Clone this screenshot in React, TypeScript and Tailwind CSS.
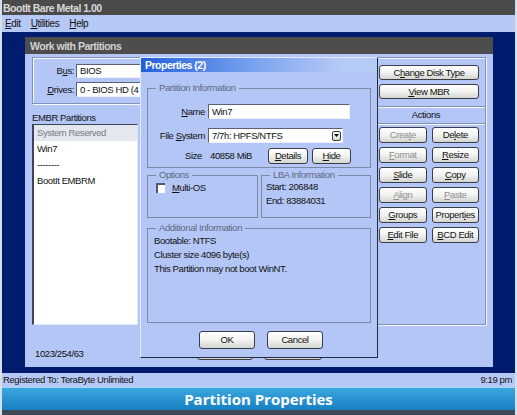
import React from 'react'

function U({ children }: { children: React.ReactNode }) {
  return <span className="underline decoration-[1px] underline-offset-[1px]">{children}</span>
}

type BtnProps = {
  children?: React.ReactNode
  disabled?: boolean
  className?: string
}

function Btn({ children, disabled, className = '' }: BtnProps) {
  return (
    <div
      className={`flex items-center justify-center rounded-[3px] border border-[#3a3e48] bg-linear-to-b from-[#ffffff] via-[#f2f2f0] to-[#d4d4d0] leading-none ${disabled ? 'text-[#8e8e8e]' : 'text-[#111]'} ${className}`}
    >
      {children}
    </div>
  )
}

function Group({
  title,
  className = '',
  children,
}: {
  title: string
  className?: string
  children?: React.ReactNode
}) {
  return (
    <fieldset className={`min-w-0 border border-[#7d88a6] ${className}`}>
      <legend className="ml-[8px] px-[3px] leading-[12px] text-[#5f6882]">{title}</legend>
      {children}
    </fieldset>
  )
}

const inset =
  'border border-r-[#eef2ff] border-b-[#eef2ff] border-t-[#5a6278] border-l-[#5a6278] bg-white'

function Dialog() {
  return (
    <div className="absolute left-[115px] top-[20px] flex h-[301px] w-[238px] flex-col border border-t-[#e4eaff] border-l-[#e4eaff] border-r-[#232a3e] border-b-[#232a3e] bg-[#b4c6f6]">
      <div className="h-[14px] bg-linear-to-r from-[#2160dc] via-[#86aaf0] via-55% to-[#b6caf6] to-85% pl-[4px] text-[10.5px] font-bold leading-[14px] tracking-[-0.5px] text-white">
        Properties (2)
      </div>
      <div className="flex flex-col px-[6px]">
        <Group title="Partition Information" className="mt-[10px] h-[86px]">
          <div className="flex flex-col pt-[10px]">
            <div className="flex h-[15px] items-center">
              <span className="w-[57px] text-right">
                <U>N</U>ame
              </span>
              <div className={`ml-[3px] flex h-[15px] w-[142px] items-center pl-[3px] ${inset}`}>
                Win7
              </div>
            </div>
            <div className="mt-[9px] flex h-[15px] items-center">
              <span className="w-[57px] text-right">
                File <U>S</U>ystem
              </span>
              <div className={`ml-[3px] flex h-[15px] w-[135px] items-center pl-[3px] ${inset}`}>
                7/7h: HPFS/NTFS
                <span className="mr-[1px] ml-auto flex h-[10px] w-[9px] items-center justify-center rounded-[2px] border border-[#3a3e48] bg-linear-to-b from-white to-[#d8d8d4]">
                  <svg width="5" height="3" viewBox="0 0 5 3">
                    <path d="M0 0h5L2.5 3z" fill="#111" />
                  </svg>
                </span>
              </div>
            </div>
            <div className="mt-[5px] flex h-[15px] items-center">
              <span className="w-[57px] pr-[3px] text-right">Size</span>
              <span className="ml-[5px] w-[58px]">40858 MiB</span>
              <Btn className="h-[16px] w-[40px]">
                <U>D</U>etails
              </Btn>
              <Btn className="ml-[4px] h-[16px] w-[39px]">
                <U>H</U>ide
              </Btn>
            </div>
          </div>
        </Group>
        <div className="mt-[1px] flex gap-[3px]">
          <Group title="Options" className="h-[49px] w-[111px]">
            <div className="mt-[1px] flex h-[11px] items-center pl-[8px]">
              <span className="h-[10px] w-[9px] border-t-2 border-l-2 border-t-[#555a66] border-l-[#555a66] bg-white" />
              <span className="ml-[7px]">
                <U>M</U>ulti-OS
              </span>
            </div>
          </Group>
          <Group title="LBA Information" className="h-[49px] flex-1">
            <div className="-mt-[1px] pl-[4px] leading-[14px]">
              <div>Start: 206848</div>
              <div>End: 83884031</div>
            </div>
          </Group>
        </div>
        <Group title="Additional Information" className="mt-[4px] h-[101px]">
          <div className="pl-[6px] leading-[14px]">
            <div>Bootable: NTFS</div>
            <div>Cluster size 4096 byte(s)</div>
            <div>This Partition may not boot WinNT.</div>
          </div>
        </Group>
        <div className="mt-[8px] flex justify-center gap-[12px] pl-[4px]">
          <Btn className="h-[18px] w-[56px]">OK</Btn>
          <Btn className="h-[18px] w-[56px]">Cancel</Btn>
        </div>
      </div>
    </div>
  )
}

export default function App() {
  const etched =
    'border border-[#8491b6] shadow-[inset_1px_1px_0_#f3f6ff,1px_1px_0_#f3f6ff]'
  return (
    <div className="flex h-[415px] w-[517px] flex-col overflow-hidden border-x-2 border-[#d3e0ea] bg-[#001c6e] font-['Liberation_Sans',Arial,sans-serif] text-[9.5px] leading-[12px] tracking-[-0.4px] text-[#111]">
      <div className="flex h-[15px] items-center bg-[#4a4a4a] pl-[1px] text-[10.5px] font-bold tracking-[-0.5px] text-[#d8d8d8]">
        BootIt Bare Metal 1.00
      </div>
      <div className="flex h-[17px] items-center gap-[10px] bg-[#b6c8f6] pl-[3px] text-[10px]">
        <span>
          <U>E</U>dit
        </span>
        <span>
          <U>U</U>tilities
        </span>
        <span>
          <U>H</U>elp
        </span>
      </div>

      <div className="flex h-[341px] pt-[5px] pb-[6px] pl-[23px]">
        <div className="relative flex h-full w-[468px] flex-col">
          <div className="flex h-[17px] items-center bg-[#4d4d4d] pl-[5px] text-[10.5px] font-bold tracking-[-0.5px] text-[#d2d2d2]">
            Work with Partitions
          </div>
          <div className="flex flex-1 justify-between bg-[#b4c6f6] pt-[3px] pr-[7px] pl-[7px]">
            <div className="flex w-[334px] flex-col">
              <div className={`flex h-[47px] flex-col pt-[6px] ${etched}`}>
                <div className="flex h-[14px] items-center">
                  <span className="w-[43px] pr-[2px] text-right">
                    B<U>u</U>s:
                  </span>
                  <div className={`flex h-[14px] w-[66px] items-center overflow-hidden whitespace-nowrap pl-[3px] ${inset}`}>
                    BIOS
                  </div>
                </div>
                <div className="mt-[4px] flex h-[15px] items-center">
                  <span className="w-[43px] pr-[2px] text-right">
                    <U>D</U>rives:
                  </span>
                  <div className={`flex h-[15px] w-[66px] items-center overflow-hidden whitespace-nowrap pl-[3px] ${inset}`}>
                    0 - BIOS HD (4
                  </div>
                </div>
              </div>
              <div className="flex h-[20px] items-end">EMBR Partitions</div>
              <div className="h-[201px] w-[106px] border border-l-2 border-t-[#3c435c] border-l-[#3c435c] border-r-[#dfe6fa] border-b-[#dfe6fa] bg-white">
                <div className="h-[16px] bg-[#e5e7ee] pl-[3px] leading-[16px] text-[#777b84]">
                  System Reserved
                </div>
                <div className="h-[16px] pl-[3px] leading-[16px]">Win7</div>
                <div className="h-[16px] pl-[3px] leading-[16px]">--------</div>
                <div className="h-[16px] pl-[3px] leading-[16px]">BootIt EMBRM</div>
              </div>
              <div className="flex flex-1 items-end pb-[7px]">
                <span className="w-[165px] pl-[3px]">1023/254/63</span>
                <Btn className="h-[18px] w-[56px]" />
                <Btn className="ml-[11px] h-[18px] w-[58px]" />
              </div>
            </div>

            <div className={`flex h-[268px] w-[114px] flex-col ${etched}`}>
              <div className="flex flex-col gap-[4px] border-b border-[#8491b6] px-[6px] pt-[7px] pb-[7px] shadow-[0_1px_0_#f3f6ff]">
                <Btn className="h-[15px]">
                  C<U>h</U>ange Disk Type
                </Btn>
                <Btn className="h-[15px]">
                  <U>V</U>iew MBR
                </Btn>
              </div>
              <div className="flex h-[17px] items-center justify-center border-b border-[#8491b6] pr-[6px] shadow-[0_1px_0_#f3f6ff]">
                Actions
              </div>
              <div className="grid grid-cols-2 gap-x-[5px] gap-y-[4px] px-[6px] pt-[3px]">
                <Btn disabled className="h-[16px]">
                  Crea<U>t</U>e
                </Btn>
                <Btn className="h-[16px]">
                  De<U>l</U>ete
                </Btn>
                <Btn disabled className="h-[16px]">
                  <U>F</U>ormat
                </Btn>
                <Btn className="h-[16px]">
                  <U>R</U>esize
                </Btn>
                <Btn className="h-[16px]">
                  <U>S</U>lide
                </Btn>
                <Btn className="h-[16px]">
                  <U>C</U>opy
                </Btn>
                <Btn disabled className="h-[16px]">
                  <U>A</U>lign
                </Btn>
                <Btn disabled className="h-[16px]">
                  <U>P</U>aste
                </Btn>
                <Btn className="h-[16px]">
                  <U>G</U>roups
                </Btn>
                <Btn className="h-[16px]">
                  Propert<U>i</U>es
                </Btn>
                <Btn className="h-[16px]">
                  <U>E</U>dit File
                </Btn>
                <Btn className="h-[16px]">
                  <U>B</U>CD Edit
                </Btn>
              </div>
            </div>
          </div>
          <Dialog />
        </div>
      </div>

      <div className="flex h-[14px] items-center justify-between bg-[#b6c8f6] pr-[3px] pl-[1px]">
        <span>Registered To: TeraByte Unlimited</span>
        <span>9:19 pm</span>
      </div>
      <div className="flex h-[28px] flex-col">
        <div className="h-[1px] bg-[#9fdcf2]" />
        <div className="flex h-[22px] items-center justify-center bg-linear-to-b from-[#3aa6de] to-[#1680c4] font-['Open_Sans',sans-serif] text-[15px] font-bold tracking-normal text-white">
          Partition Properties
        </div>
        <div className="flex-1 bg-[#3b4a56]" />
      </div>
    </div>
  )
}
